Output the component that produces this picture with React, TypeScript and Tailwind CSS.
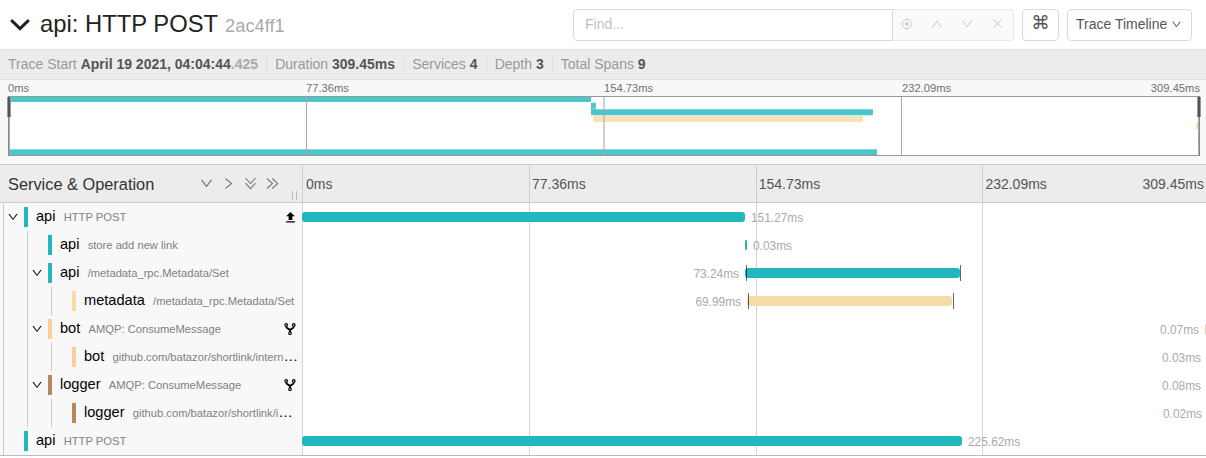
import React from "react";
import { AiOutlineClose, AiOutlineDown, AiOutlineRight, AiOutlineUp } from "react-icons/ai";
import { MdFileUpload } from "react-icons/md";

const TEAL = "#20b8bd";
const SAND = "#f6dca6";
const PEACH = "#ffcb99";
const BROWN = "#b7885e";

interface Span {
  service: string;
  operation: string;
  depth: number;
  color: string;
  left: number;
  width: number;
  duration: string;
  labelSide: "left" | "right";
  expandable?: boolean;
  kind?: "upload" | "fork";
  ticks?: number[];
}

const spans: Span[] = [
  { service: "api", operation: "HTTP POST", depth: 0, color: TEAL, left: 0, width: 443, duration: "151.27ms", labelSide: "right", expandable: true, kind: "upload" },
  { service: "api", operation: "store add new link", depth: 1, color: TEAL, left: 443, width: 2, duration: "0.03ms", labelSide: "right" },
  { service: "api", operation: "/metadata_rpc.Metadata/Set", depth: 1, color: TEAL, left: 443, width: 215, duration: "73.24ms", labelSide: "left", expandable: true, ticks: [1, 215] },
  { service: "metadata", operation: "/metadata_rpc.Metadata/Set", depth: 2, color: SAND, left: 445, width: 205, duration: "69.99ms", labelSide: "left", ticks: [1, 206] },
  { service: "bot", operation: "AMQP: ConsumeMessage", depth: 1, color: PEACH, left: 903, width: 2, duration: "0.07ms", labelSide: "left", expandable: true, kind: "fork" },
  { service: "bot", operation: "github.com/batazor/shortlink/internal/bot", depth: 2, color: PEACH, left: 905, width: 2, duration: "0.03ms", labelSide: "left" },
  { service: "logger", operation: "AMQP: ConsumeMessage", depth: 1, color: BROWN, left: 905, width: 2, duration: "0.08ms", labelSide: "left", expandable: true, kind: "fork" },
  { service: "logger", operation: "github.com/batazor/shortlink/internal/logger", depth: 2, color: BROWN, left: 906, width: 2, duration: "0.02ms", labelSide: "left" },
  { service: "api", operation: "HTTP POST", depth: 0, color: TEAL, left: 0, width: 660, duration: "225.62ms", labelSide: "right" },
];

const ticks = ["0ms", "77.36ms", "154.73ms", "232.09ms"];

function LocateIcon() {
  return (
    <svg viewBox="0 0 12 12" className="size-3" fill="none" stroke="currentColor">
      <circle cx="6" cy="6" r="4.6" strokeWidth="1.1" />
      <circle cx="6" cy="6" r="2.1" fill="currentColor" stroke="none" />
      <path d="M6 0v1.5M6 10.5V12M0 6h1.5M10.5 6H12" strokeWidth="1.2" />
    </svg>
  );
}

function ForkIcon() {
  return (
    <svg viewBox="0 0 12 12" className="h-3 w-3" fill="none" stroke="#000">
      <circle cx="2.2" cy="1.9" r="1.3" strokeWidth="1.1" />
      <circle cx="9.8" cy="1.9" r="1.3" strokeWidth="1.1" />
      <circle cx="6" cy="10.2" r="1.3" strokeWidth="1.1" />
      <path d="M2.3 3.2v.8c0 1.7 3.7 1.6 3.7 3.6V9M9.7 3.2v.8C9.7 5.7 6 5.6 6 7.6" strokeWidth="1.8" />
    </svg>
  );
}

function DoubleChevron({ className = "" }: { className?: string }) {
  return (
    <svg viewBox="0 0 15 15" className={`size-[15px] ${className}`} fill="none" stroke="currentColor" strokeWidth="1.1">
      <path d="M2 2.5 7.500 7.500 2 12.500M7.200 2.500l5.500 5-5.500 5" />
    </svg>
  );
}

function Header() {
  return (
    <header className="flex h-[49px] items-center pr-[14px] pl-[10px]">
      <svg viewBox="0 0 20 12" className="mt-px h-3 w-5" fill="none" stroke="#222" strokeWidth="3">
        <path d="M1.2 1.2 10 9.7 18.8 1.2" />
      </svg>
      <h1 className="-mt-0.5 ml-[10px] flex items-baseline text-[23.8px] leading-none text-[#222]">
        api: HTTP POST
        <span className="ml-[7px] text-[18.3px] text-[#aaa]">2ac4ff1</span>
      </h1>
      <div className="ml-auto flex h-8 text-sm">
        <div className="flex w-[320px] items-center rounded-l border border-[#d9d9d9] pl-[11px] text-[#bfbfbf]">
          <span className="-mt-0.5">Find...</span>
        </div>
        <div className="flex w-[121px] items-center justify-between rounded-r border border-l-0 border-[#e8e8e8] bg-[#fafafa] pb-0.5 pr-[9px] pl-2 text-[14px] text-[#d2d2d2]">
          <LocateIcon />
          <AiOutlineUp className="ml-[3px] text-[14px]" />
          <AiOutlineDown className="ml-[3px] text-[14px]" />
          <AiOutlineClose className="ml-[3px] text-[13px]" />
        </div>
        <div className="ml-2 flex w-[37px] items-center justify-center rounded border border-[#d9d9d9] text-[18.5px] text-[#555]">
          <span className="-mt-0.5 [font-family:'DejaVu_Sans',sans-serif]">⌘</span>
        </div>
        <div className="ml-2 flex w-[125px] items-center rounded border border-[#d9d9d9] pb-0.5 pl-2 text-[#555]">
          Trace Timeline
          <AiOutlineDown className="mt-0.5 ml-1 text-[11px]" />
        </div>
      </div>
    </header>
  );
}

function Summary() {
  const items: [string, React.ReactNode][] = [
    ["Trace Start", <>April 19 2021, 04:04:44<span className="text-[#aaa]">.425</span></>],
    ["Duration", "309.45ms"],
    ["Services", "4"],
    ["Depth", "3"],
    ["Total Spans", "9"],
  ];
  return (
    <div className="flex h-[31px] items-center border-y border-[#e4e4e4] bg-[#ececec] pb-0.5 pl-2 text-sm leading-none text-[#999]">
      {items.map(([label, value], i) => (
        <div key={label} className={i < items.length - 1 ? "mr-[8.1px] border-r border-[#ddd] pr-2 whitespace-nowrap" : "whitespace-nowrap"}>
          {label} <b className="text-[#555]">{value}</b>
        </div>
      ))}
    </div>
  );
}

function Minimap() {
  return (
    <div className="h-[84px] bg-[#f8f8f8] px-2">
      <div className="flex h-4 w-[1192px] text-[11.2px] leading-[17px] text-[#717171]">
        {ticks.map((t, i) => (
          <span key={t} className={i === 3 ? "w-[248px] shrink-0" : "w-[298px] shrink-0"}>{t}</span>
        ))}
        <span className="w-[50px] text-right">309.45ms</span>
      </div>
      <svg width="1192" height="60" viewBox="8 96 1192 60" className="block overflow-visible" shapeRendering="crispEdges">
        <rect x="8" y="96" width="1192" height="60" fill="#fff" />
        <g fill="#4bc6cb">
          <rect x="9" y="97" width="582" height="5" />
          <rect x="591" y="103" width="5" height="5" />
          <rect x="591" y="102" width="5" height="1" opacity=".3" />
          <rect x="591" y="108" width="5" height="1" opacity=".65" />
          <rect x="591" y="109" width="282" height="6" />
          <rect x="596" y="109" width="277" height="1" fill="#7dd6da" />
          <rect x="591" y="115" width="282" height="1" opacity=".3" />
          <rect x="9" y="149" width="868" height="1" opacity=".65" />
          <rect x="9" y="150" width="868" height="5" />
        </g>
        <rect x="593" y="116" width="270" height="6" fill="#fae2b7" />
        <rect x="1196" y="123" width="3" height="6" fill="#ffd5ad" />
        <path d="M306.5 97v58M901.5 97v58" stroke="#aaa" />
        <rect x="603" y="97" width="2" height="58" fill="#aaa" opacity=".55" />
        <path d="M8 96.5h1192M8 155.5h1192" stroke="#999" />
        <path d="M8.5 96v60M1199.5 96v60" stroke="#888" />
        <path d="M9.5 97v58M1198.5 97v58" stroke="#aaa" />
        <rect x="1198" y="136" width="1" height="6" fill="#c59f7e" />
        <rect x="7" y="97" width="4" height="20" fill="#999" />
        <rect x="8" y="97" width="2" height="20" fill="#555" />
        <rect x="1197" y="97" width="4" height="20" fill="#999" />
        <rect x="1198" y="97" width="2" height="20" fill="#555" />
      </svg>
    </div>
  );
}

function TimelineHeader() {
  return (
    <div className="flex h-[39px] border-y border-[#ccc] bg-[#ececec]">
      <div className="flex w-[302px] shrink-0 items-center pl-2">
        <h2 className="w-[191px] pt-px text-[16.35px] whitespace-nowrap text-[#333]">Service &amp; Operation</h2>
        <div className="flex items-center gap-[7px] text-[15px] text-[#777]">
          <AiOutlineDown />
          <AiOutlineRight />
          <DoubleChevron className="rotate-90" />
          <DoubleChevron />
        </div>
        <div className="mt-[23px] mr-[5px] ml-auto h-[9px] w-[5px] border-x border-[#bbb]" />
      </div>
      <div className="relative flex grow text-sm leading-[39px] text-[#555]">
        {ticks.map((t, i) => (
          <div key={t} className={i === 0 ? "h-[37px] w-[227px] shrink-0 border-l border-[#ccc] pl-[3px]" : i === 3 ? "h-[37px] grow border-l border-[#ccc] pl-[2px]" : "h-[37px] w-[226.7px] shrink-0 border-l border-[#ccc] pl-[2px]"}>
            {t}
          </div>
        ))}
        <span className="absolute right-[2px]">309.45ms</span>
      </div>
    </div>
  );
}

function SpanRow({ span }: { span: Span }) {
  return (
    <div className="flex h-7">
      <div className="flex w-[302px] shrink-0 bg-[#f8f8f8] pl-[3px]">
        {Array.from({ length: span.depth + 1 }, (_, i) => (
          <div key={i} className={i === span.depth ? "flex w-[21px] shrink-0 items-center border-l border-[#ccc] pl-[3px]" : "w-6 shrink-0 border-l border-[#ccc]"}>
            {i === span.depth && span.expandable && <AiOutlineDown className="size-3 shrink-0 text-black" />}
          </div>
        ))}
        <div className="mt-1 h-5 w-1 shrink-0" style={{ background: span.color }} />
        <div className="ml-2 min-w-0 grow truncate pr-[3px] text-[14.6px] leading-[26px] text-black">
          {span.service}
          <span className="ml-[8.2px] text-[11.2px] text-[#808080]">{span.operation}</span>
        </div>
        {span.kind && (
          <div className="flex w-[18px] shrink-0 items-center">
            {span.kind === "upload" ? <MdFileUpload className="-ml-[1.5px] size-[15px] shrink-0 text-black" /> : <ForkIcon />}
          </div>
        )}
      </div>
      <div className="relative grow overflow-x-clip">
        <div className="flex h-full w-full">
          <div className="w-[227px] shrink-0 border-l border-[#d4d4d4]" />
          <div className="w-[226.7px] shrink-0 border-l border-[#d4d4d4]" />
          <div className="w-[226.7px] shrink-0 border-l border-[#d4d4d4]" />
          <div className="grow border-l border-[#d4d4d4]" />
        </div>
        <div className="absolute top-[9px] h-[10px] rounded-[3px]" style={{ left: span.left, width: span.width, background: span.color }}>
          <span className={span.labelSide === "left" ? "absolute right-full mr-[6px] text-[11.9px] leading-[12px] text-[#aaa]" : "absolute left-full ml-[6px] text-[11.9px] leading-[12px] text-[#aaa]"}>
            {span.duration}
          </span>
          {span.ticks?.map((x) => (
            <i key={x} className="absolute -top-[3px] h-4 w-px bg-black/60" style={{ left: x }} />
          ))}
        </div>
      </div>
    </div>
  );
}

export default function App() {
  return (
    <div className="h-[458px] w-[1206px] overflow-hidden bg-white [font-family:'Liberation_Sans',Arial,sans-serif]">
      <Header />
      <Summary />
      <Minimap />
      <TimelineHeader />
      <main className="border-b border-[#bbb]">
        {spans.map((span, i) => (
          <SpanRow key={i} span={span} />
        ))}
      </main>
    </div>
  );
}
